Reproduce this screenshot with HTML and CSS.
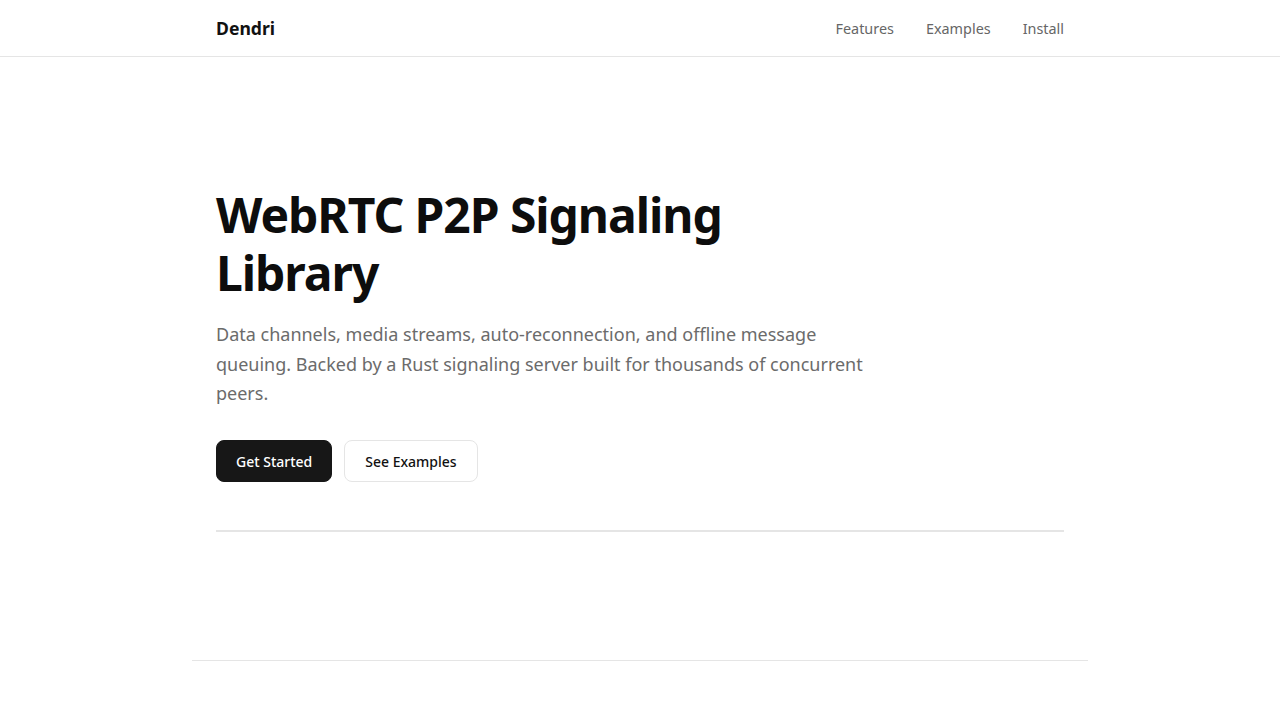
FILE: index.html
```html
<!DOCTYPE html>
<html lang="en">
<head>
<meta charset="utf-8">
<title>Dendri</title>
<link rel="stylesheet" href="styles.css">
</head>
<body>
<header class="topbar">
	<div class="wrap topbar-inner">
		<a class="logo" href="#">Dendri</a>
		<nav class="nav">
			<a href="#features">Features</a>
			<a href="#examples">Examples</a>
			<a href="#install">Install</a>
		</nav>
	</div>
</header>
<main class="wrap">
	<section class="hero">
		<h1>WebRTC P2P Signaling Library</h1>
		<p class="lead">Data channels, media streams, auto-reconnection, and offline message queuing. Backed by a Rust signaling server built for thousands of concurrent peers.</p>
		<div class="actions">
			<a class="btn btn-dark" href="#install">Get Started</a>
			<a class="btn btn-light" href="#examples">See Examples</a>
		</div>
	</section>
	<hr class="rule">
	<div class="spacer"></div>
</main>
<footer class="foot"></footer>
</body>
</html>
```

FILE: styles.css
```css
* {
	margin: 0;
	padding: 0;
	box-sizing: border-box;
	}
body{
	font-family: "Noto Sans", "Open Sans", sans-serif;
	color: #111;
	background: #fff;
	}
a{
	color: inherit;
	text-decoration: none;
	}
.wrap{
	width: 848px;
	margin: 0 auto;
	}
.topbar{
	height: 57px;
	border-bottom: 1px solid #e5e5e5;
	}
.topbar-inner{
	height: 56px;
	display: flex;
	align-items: center;
	justify-content: space-between;
	}
.logo{
	font-size: 1.1rem;
	font-weight: 700;
	color: #111;
	}
.nav{
	display: flex;
	gap: 32px;
	}
.nav a{
	font-size: 0.9rem;
	color: #666;
	}
.hero{
	padding: 129px 0 48px;
	}
.hero h1{
	max-width: 640px;
	font-size: 48px;
	font-weight: 700;
	line-height: 1.2;
	letter-spacing: -0.022em;
	color: #0d0d0d;
	}
.lead{
	margin-top: 19px;
	max-width: 680px;
	font-size: 18px;
	line-height: 1.63;
	color: #6b6b6b;
	}
.actions{
	margin-top: 32px;
	display: flex;
	gap: 12px;
	}
.btn{
	display: inline-flex;
	align-items: center;
	height: 42px;
	padding: 0 19px;
	border-radius: 8px;
	font-size: 14px;
	font-weight: 500;
	}
.btn-dark{
	background: #171717;
	color: #fff;
	border: 1px solid #171717;
	}
.btn-light{
	padding: 0 20px;
	background: #fff;
	color: #111;
	border: 1px solid #e5e5e5;
	}
.rule{
	border: 0;
	border-top: 2px solid #e5e5e5;
	}
.spacer{
	height: 128px;
	}
.foot{
	width: 896px;
	margin: 0 auto;
	border-top: 1px solid #e5e5e5;
	height: 60px;
	}
```
